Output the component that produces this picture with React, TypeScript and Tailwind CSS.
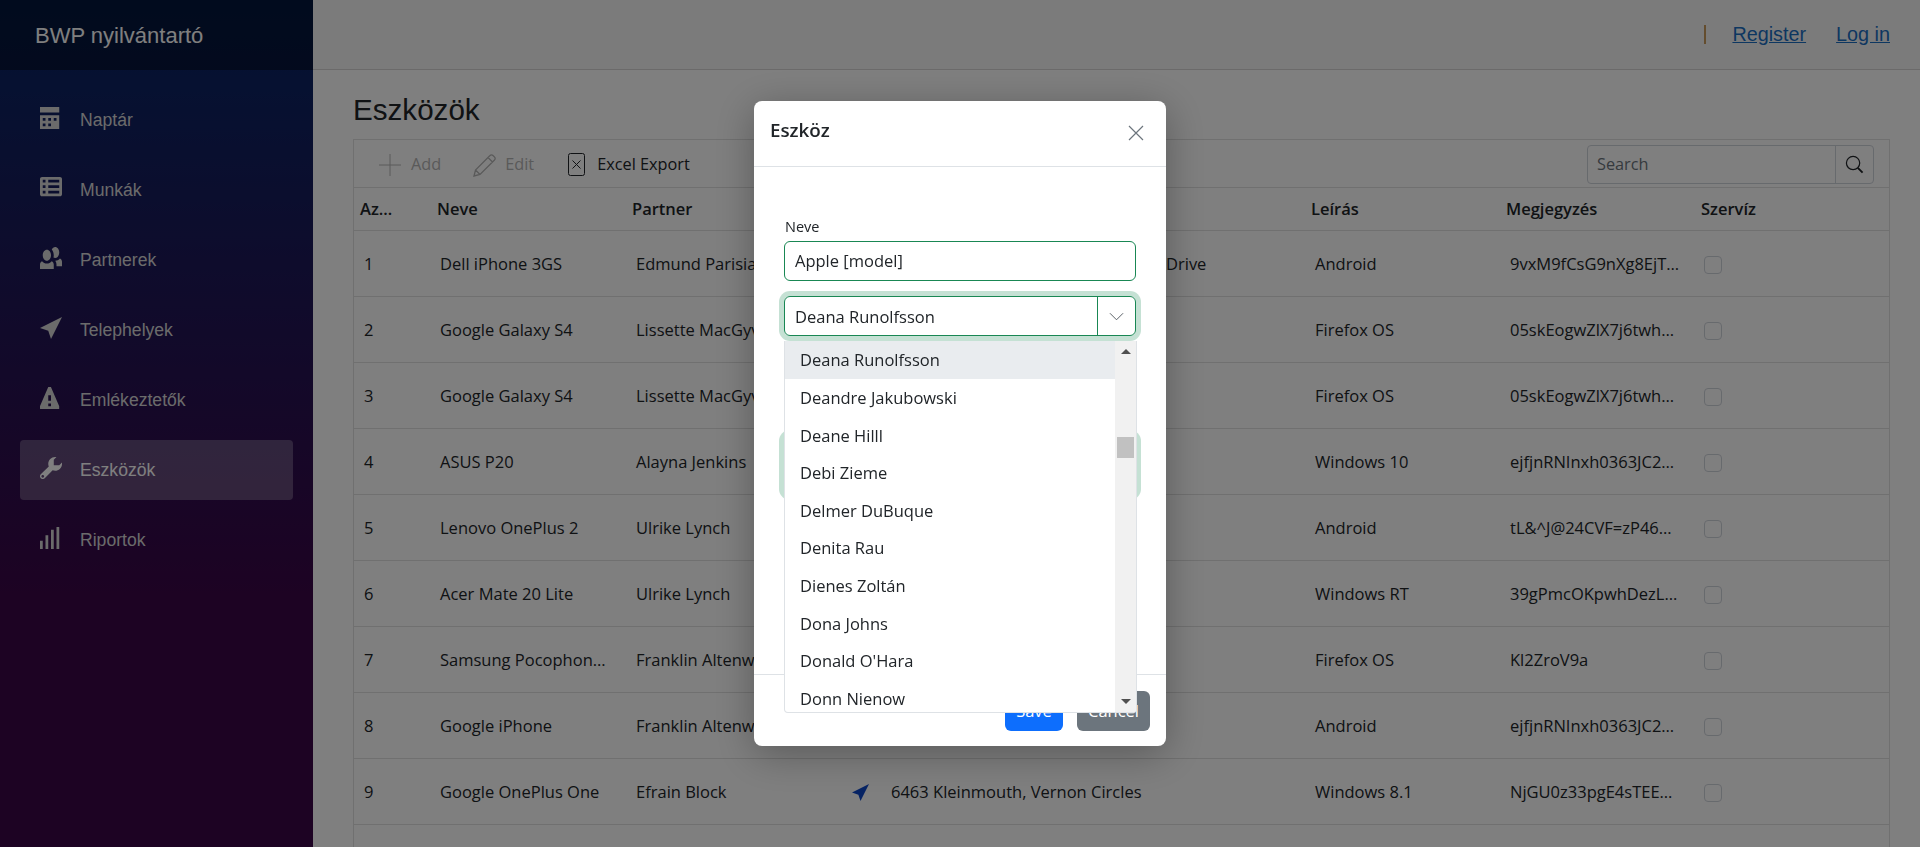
import { ReactNode } from 'react';

const NAV_ITEMS = [
  { label: 'Naptár', viewBox: '0 0 8 8', d: 'M0 0v2h7v-2h-7zm0 3v4.91c0 .05.04.09.09.09h6.81c.05 0 .09-.04.09-.09v-4.91h-7zm1 1h1v1h-1v-1zm2 0h1v1h-1v-1zm2 0h1v1h-1v-1zm-4 2h1v1h-1v-1zm2 0h1v1h-1v-1z' },
  { label: 'Munkák', viewBox: '0 0 8 8', d: 'M.75 0c-.41 0-.75.34-.75.75v5.5c0 .41.34.75.75.75h6.5c.41 0 .75-.34.75-.75v-5.5c0-.41-.34-.75-.75-.75h-6.5zm.25 1h1v1h-1v-1zm2 0h4v1h-4v-1zm-2 2h1v1h-1v-1zm2 0h4v1h-4v-1zm-2 2h1v1h-1v-1zm2 0h4v1h-4v-1z' },
  { label: 'Partnerek', viewBox: '0 0 8 8', d: 'M5.5 0c-.51 0-.95.35-1.22.88.45.54.72 1.28.72 2.13 0 .29-.03.55-.09.81.19.11.38.19.59.19.83 0 1.5-.9 1.5-2s-.67-2-1.5-2zm-3 1c-.83 0-1.5.9-1.5 2s.67 2 1.5 2 1.5-.9 1.5-2-.67-2-1.5-2zm4.75 3.16c-.43.51-1.02.82-1.69.84.27.38.44.84.44 1.34v.66h2v-1.66c0-.52-.31-.97-.75-1.19zm-6.5 1c-.44.22-.75.67-.75 1.19v1.66h5v-1.66c0-.52-.31-.97-.75-1.19-.45.53-1.06.84-1.75.84s-1.3-.32-1.75-.84z' },
  { label: 'Telephelyek', viewBox: '0 0 8 8', d: 'M8 0l-8 4 3 1 1 3 4-8z' },
  { label: 'Emlékeztetők', viewBox: '0 0 8 8', d: 'M3.09 0c-.06 0-.1.04-.13.09l-2.94 6.81c-.02.05-.03.13-.03.19v.81c0 .05.04.09.09.09h6.81c.05 0 .09-.04.09-.09v-.81c0-.05-.01-.14-.03-.19l-2.94-6.81c-.02-.05-.07-.09-.13-.09h-.81zm-.09 3h1v2h-1v-2zm0 3h1v1h-1v-1z' },
  { label: 'Eszközök', viewBox: '0 0 8 8', d: 'M5.5 0c-1.38 0-2.5 1.12-2.5 2.5 0 .32.08.62.19.91l-2.91 2.88c-.39.39-.39 1.05 0 1.44.2.2.46.28.72.28.26 0 .52-.09.72-.28l2.88-2.91c.28.11.58.19.91.19 1.38 0 2.5-1.12 2.5-2.5 0-.16 0-.32-.03-.47l-.97.97h-2v-2l.97-.97c-.15-.03-.31-.03-.47-.03zm-4.5 6.5c.28 0 .5.22.5.5s-.22.5-.5.5-.5-.22-.5-.5.22-.5.5-.5z', active: true },
  { label: 'Riportok', viewBox: '0 0 8 8', d: 'M6 0v8h1v-8h-1zm-2 1v7h1v-7h-1zm-2 2v5h1v-5h-1zm-2 2v3h1v-3h-1z' },
];

const ROWS = [
  { id: 1, name: 'Dell iPhone 3GS', partner: 'Edmund Parisian', os: 'Android', note: '9vxM9fCsG9nXg8EjT…', tail: 'Drive' },
  { id: 2, name: 'Google Galaxy S4', partner: 'Lissette MacGyver', os: 'Firefox OS', note: '05skEogwZlX7j6twh…' },
  { id: 3, name: 'Google Galaxy S4', partner: 'Lissette MacGyver', os: 'Firefox OS', note: '05skEogwZlX7j6twh…' },
  { id: 4, name: 'ASUS P20', partner: 'Alayna Jenkins', os: 'Windows 10', note: 'ejfjnRNInxh0363JC2…' },
  { id: 5, name: 'Lenovo OnePlus 2', partner: 'Ulrike Lynch', os: 'Android', note: 'tL&^J@24CVF=zP46…' },
  { id: 6, name: 'Acer Mate 20 Lite', partner: 'Ulrike Lynch', os: 'Windows RT', note: '39gPmcOKpwhDezL…' },
  { id: 7, name: 'Samsung Pocophon…', partner: 'Franklin Altenwerth', os: 'Firefox OS', note: 'Kl2ZroV9a' },
  { id: 8, name: 'Google iPhone', partner: 'Franklin Altenwerth', os: 'Android', note: 'ejfjnRNInxh0363JC2…' },
  { id: 9, name: 'Google OnePlus One', partner: 'Efrain Block', os: 'Windows 8.1', note: 'NjGU0z33pgE4sTEE…', location: '6463 Kleinmouth, Vernon Circles' },
];

const OPTIONS = ['Deana Runolfsson', 'Deandre Jakubowski', 'Deane Hilll', 'Debi Zieme', 'Delmer DuBuque', 'Denita Rau', 'Dienes Zoltán', 'Dona Johns', "Donald O'Hara", 'Donn Nienow'];

const COLS = 'grid grid-cols-[77px_196px_194px_485px_195px_194px_1fr]';

function ToolbarItem({ icon, label, disabled }: { icon: ReactNode; label: string; disabled?: boolean }) {
  return (
    <div className={`flex items-center ${disabled ? 'text-[#b4b4b4]' : 'text-[#212529]'}`}>
      {icon}
      <span>{label}</span>
    </div>
  );
}

function Sidebar() {
  return (
    <aside className="w-[313px] shrink-0 bg-[linear-gradient(180deg,#052767_0%,#3a0647_70%)] font-['Liberation_Sans',sans-serif]">
      <div className="h-[70px] bg-black/40 pl-[35px] flex items-center text-[22px] text-white">BWP nyilvántartó</div>
      <nav className="pt-5 px-5 flex flex-col gap-[10px]">
        {NAV_ITEMS.map((item) => (
          <div
            key={item.label}
            className={`h-[60px] rounded-[4px] flex items-center pl-5 text-[17.6px] ${item.active ? 'bg-white/25 text-white' : 'text-[#d7d7d7]'}`}
          >
            <svg viewBox={item.viewBox} className="w-[22px] h-[22px] mr-[18px] -mt-1 fill-current">
              <path d={item.d} />
            </svg>
            {item.label}
          </div>
        ))}
      </nav>
    </aside>
  );
}

function Toolbar() {
  return (
    <div className="h-[48px] pt-[2px] border-b border-[#e0e0e0] flex items-center pl-[25px] pr-[15px] text-[16.300px]">
      <ToolbarItem
        disabled
        label="Add"
        icon={
          <svg viewBox="0 0 22 22" className="w-[22px] h-[22px] mr-[10px] stroke-current fill-none">
            <path d="M11 0v22M0 11h22" />
          </svg>
        }
      />
      <div className="ml-[32px]">
        <ToolbarItem
          disabled
          label="Edit"
          icon={
            <svg viewBox="0 0 24 24" className="w-[24px] h-[24px] mr-[8px] stroke-current fill-none" strokeWidth="1.3">
              <path d="M1 23l1.5-6L17 2.5a2 2 0 0 1 3 0l1.5 1.5a2 2 0 0 1 0 3L7 21.500z M2.500 17l4.500 4.500 M15 4.500l4.500 4.500" />
            </svg>
          }
        />
      </div>
      <div className="ml-[34px]">
        <ToolbarItem
          label="Excel Export"
          icon={
            <svg viewBox="0 0 17 23" className="w-[17px] h-[23px] mr-[12px] fill-none stroke-[#212529]">
              <rect x="0.500" y="0.500" width="16" height="22" rx="2" />
              <path d="M4.500 7.500l8 8M12.500 7.500l-8 8" />
            </svg>
          }
        />
      </div>
      <div className="ml-auto w-[287px] h-[39px] border border-[#ced4da] rounded-[4px] flex items-center">
        <span className="flex-1 pl-[9px] text-[#6c757d]">Search</span>
        <div className="w-[38px] h-full border-l border-[#ced4da] flex items-center justify-center">
          <svg viewBox="0 0 20 20" className="w-[19px] h-[19px] fill-none stroke-[#212529]" strokeWidth="1.300">
            <circle cx="8.500" cy="8.500" r="7" />
            <path d="M13.500 13.500l5 5" strokeWidth="2" />
          </svg>
        </div>
      </div>
    </div>
  );
}

function DeviceGrid() {
  return (
    <div className="border border-b-0 border-[#e0e0e0] font-['Open_Sans',sans-serif] text-[#212529]">
      <Toolbar />
      <div className={`${COLS} h-[43px] items-center border-b border-[#e0e0e0] text-[16.500px] font-semibold`}>
        <div className="pl-[6px]">Az…</div>
        <div className="pl-[6px]">Neve</div>
        <div className="pl-[5px]">Partner</div>
        <div />
        <div className="pl-[5px]">Leírás</div>
        <div className="pl-[5px]">Megjegyzés</div>
        <div className="pl-[6px]">Szervíz</div>
      </div>
      {ROWS.map((row) => (
        <div key={row.id} className={`${COLS} h-[66px] pt-[2px] items-center border-b border-[#e0e0e0] text-[16.500px]`}>
          <div className="pl-[10px]">{row.id}</div>
          <div className="pl-[9px]">{row.name}</div>
          <div className="pl-[9px] whitespace-nowrap">{row.partner}</div>
          <div className="pl-[31px] flex items-center">
            {row.location && (
              <>
                <svg viewBox="0 0 8 8" className="w-[17px] h-[17px] mr-[22px] fill-[#0d47c9]">
                  <path d="M8 0l-8 4 3 1 1 3 4-8z" />
                </svg>
                {row.location}
              </>
            )}
            {row.tail && <span className="ml-[314px]">{row.tail}</span>}
          </div>
          <div className="pl-[9px]">{row.os}</div>
          <div className="pl-[9px] whitespace-nowrap">{row.note}</div>
          <div className="pl-[9px]">
            <div className="w-[18px] h-[18px] rounded-[4px] border border-[#ced4da] bg-white" />
          </div>
        </div>
      ))}
      <div className="h-[30px]" />
    </div>
  );
}

function OptionList() {
  return (
    <div className="absolute left-[30px] top-[240px] w-[353px] h-[372px] bg-white border-x border-b border-[#dee2e6] rounded-b-[4px] overflow-hidden flex">
      <div className="flex-1 min-w-0">
        {OPTIONS.map((option, i) => (
          <div key={option} className={`h-[37.600px] pl-[15px] pt-[2px] flex items-center ${i === 0 ? 'bg-[#e9ecef]' : ''}`}>
            {option}
          </div>
        ))}
      </div>
      <div className="w-[21px] bg-[#f1f1f1] flex flex-col items-center justify-between py-[8px] relative">
        <div className="w-0 h-0 border-x-[5px] border-x-transparent border-b-[5px] border-b-[#505050]" />
        <div className="absolute left-[2px] top-[96px] w-[17px] h-[21px] bg-[#c1c1c1]" />
        <div className="w-0 h-0 border-x-[5px] border-x-transparent border-t-[5px] border-t-[#505050]" />
      </div>
    </div>
  );
}

function DeviceModal() {
  return (
    <div className="fixed inset-0 bg-black/50 flex justify-center items-start pt-[101px]">
      <div className="relative w-[412px] h-[645px] bg-white rounded-[8px] flex flex-col shadow-[0_8px_40px_rgba(0,0,0,0.3)] font-['Open_Sans',sans-serif] text-[16.500px] text-[#212529]">
        <div className="h-[66px] shrink-0 border-b border-[#dee2e6] flex items-center justify-between pl-[16px] pr-[22px]">
          <h5 className="text-[18.800px] font-semibold -mt-[7px]">Eszköz</h5>
          <svg viewBox="0 0 16 16" className="w-[16px] h-[16px] -mt-[2px] stroke-[#6c757d] fill-none" strokeWidth="1.200">
            <path d="M1 1l14 14M15 1L1 15" />
          </svg>
        </div>
        <div className="flex-1 px-[30px] pt-[50px]">
          <label className="block text-[14.500px] leading-[18px] pl-[1px] pt-[1px] mb-[5px]">Neve</label>
          <div className="h-[40px] border border-[#198754] rounded-[6px] flex items-center pl-[10px] pt-[1px]">Apple [model]</div>
          <div className="mt-[15px] h-[40px] border border-[#198754] rounded-[6px] flex items-center shadow-[0_0_0_5px_rgba(25,135,84,0.25)]">
            <span className="flex-1 pl-[10px] pt-[2px]">Deana Runolfsson</span>
            <div className="w-[38px] h-full border-l border-[#198754] flex items-center justify-center">
              <svg viewBox="0 0 16 9" className="w-[15px] h-[9px] stroke-[#50575e] fill-none">
                <path d="M1 1l7 7 7-7" />
              </svg>
            </div>
          </div>
          <div className="mt-[99px] h-[60px] border border-[#198754] rounded-[6px] shadow-[0_0_0_5px_rgba(25,135,84,0.25)]" />
        </div>
        <div className="h-[72px] shrink-0 border-t border-[#dee2e6] flex items-center justify-end gap-[14px] pr-[16px] pt-[1px]">
          <button className="w-[58px] h-[40px] rounded-[6px] bg-[#0d6efd] text-white">Save</button>
          <button className="w-[73px] h-[40px] rounded-[6px] bg-[#6c757d] text-white">Cancel</button>
        </div>
        <OptionList />
      </div>
    </div>
  );
}

export default function App() {
  return (
    <div className="h-screen flex overflow-hidden bg-white">
      <Sidebar />
      <main className="flex-1 min-w-0 font-['Liberation_Sans',sans-serif]">
        <header className="h-[70px] bg-[#f7f7f7] border-b border-[#d6d5d5] flex items-center justify-end pr-[30px] text-[19.800px]">
          <span className="w-[2px] h-[19px] bg-[#c89a5c]" />
          <a className="ml-[26px] text-[#1b6ec2] underline">Register</a>
          <a className="ml-[30px] text-[#1b6ec2] underline">Log in</a>
        </header>
        <div className="pl-[40px] pr-[30px]">
          <h1 className="pt-[22px] pb-[11px] text-[29.600px] leading-[36px] text-[#212529]">Eszközök</h1>
          <DeviceGrid />
        </div>
      </main>
      <DeviceModal />
    </div>
  );
}
